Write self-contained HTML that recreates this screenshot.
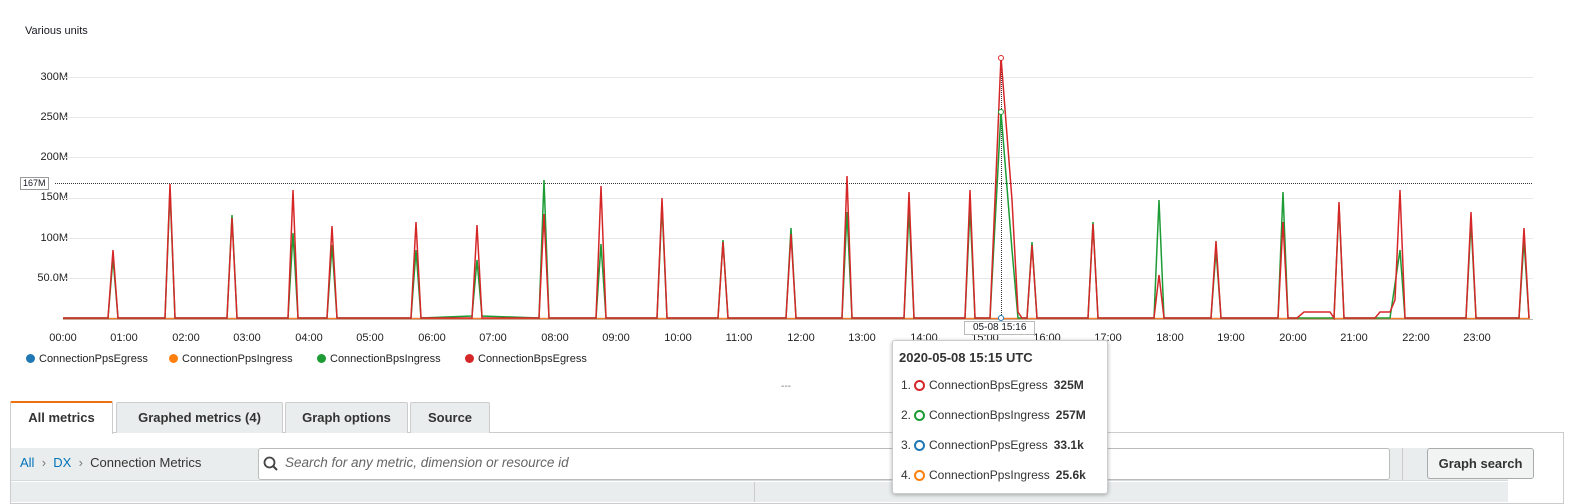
<!DOCTYPE html><html><head><style>
body{margin:0;width:1575px;height:499px;overflow:hidden;background:#fff;font-family:"Liberation Sans",Arial,sans-serif;position:relative;color:#16191f}
.a{position:absolute}
.yl{position:absolute;font-size:11px;color:#222;right:1507px}
.xl{position:absolute;font-size:11px;color:#222;top:332px;width:40px;text-align:center}
.tab{position:absolute;top:402px;height:30px;background:#eaeded;border:1px solid #ccc;border-bottom:none;font-size:13px;font-weight:bold;line-height:30px;text-align:center;border-radius:2px 2px 0 0;color:#333}
.lg{position:absolute;top:353px;font-size:11px;color:#222}
.lg i{display:inline-block;width:9px;height:9px;border-radius:50%;margin-right:4px;vertical-align:-1px}
.tr{position:absolute;left:8px;font-size:12px;color:#333}
.tr i{display:inline-block;width:7px;height:7px;border:2px solid;border-radius:50%;margin:0 4px 0 3px;vertical-align:-2px}
.tr b{margin-left:6px}
</style></head><body>
<div class="a" style="left:25px;top:25px;font-size:11px">Various units</div>
<div class="yl" style="top:71px">300M</div>
<div class="yl" style="top:111px">250M</div>
<div class="yl" style="top:151px">200M</div>
<div class="yl" style="top:191px">150M</div>
<div class="yl" style="top:232px">100M</div>
<div class="yl" style="top:272px">50.0M</div>
<svg class="a" style="left:0;top:0" width="1575" height="340">
<g stroke="#e8e8e8" stroke-width="1">
<line x1="63" x2="1533" y1="77.5" y2="77.5"/><line x1="63" x2="1533" y1="117.5" y2="117.5"/><line x1="63" x2="1533" y1="157.5" y2="157.5"/><line x1="63" x2="1533" y1="198.5" y2="198.5"/><line x1="63" x2="1533" y1="238.5" y2="238.5"/><line x1="63" x2="1533" y1="278.5" y2="278.5"/></g>
<line x1="55" x2="1533" y1="183.5" y2="183.5" stroke="#333" stroke-dasharray="1,1"/>
<line x1="1001.5" x2="1001.5" y1="58" y2="319" stroke="#333" stroke-dasharray="1,1"/>
<line x1="63" x2="1533" y1="319.5" y2="319.5" stroke="#bbb"/>
<line x1="63" x2="1530" y1="318.5" y2="318.5" stroke="#f47b2a" stroke-width="1.5"/>
<path fill="none" stroke="#1d9b35" stroke-width="1.5" d="M63,318 L108,318 L113,258 L118,318 L165,318 L170,190 L175,318 L227,318 L232,215 L237,318 L288,318 L293,233 L298,318 L327,318 L332,245 L337,318 L411,318 L416,250 L421,318 L472,316 L477,260 L482,316 L539,318 L544,180 L549,318 L596,318 L601,244 L606,318 L657,318 L662,205 L667,318 L718,318 L723,240 L728,318 L786,318 L791,228 L796,318 L842,318 L847,212 L852,318 L904,318 L909,210 L914,318 L965,318 L970,208 L975,318 L990,318 L1001,112 L1012,250 L1018,318 L1027,318 L1032,242 L1037,318 L1088,318 L1093,222 L1098,318 L1154,318 L1159,200 L1164,318 L1211,318 L1216,250 L1221,318 L1278,318 L1283,192 L1288,318 L1334,318 L1339,205 L1344,318 L1390,318 L1400,250 L1405,318 L1466,318 L1471,222 L1476,318 L1519,318 L1524,240 L1529,318"/>
<path fill="none" stroke="#d62728" stroke-width="1.5" d="M63,318 L108,318 L113,250 L118,318 L165,318 L170,184 L175,318 L227,318 L232,218 L237,318 L288,318 L293,190 L298,318 L327,318 L332,226 L337,318 L411,318 L416,222 L421,318 L472,318 L477,225 L482,318 L539,318 L544,214 L549,318 L596,318 L601,186 L606,318 L657,318 L662,198 L667,318 L718,318 L723,242 L728,318 L786,318 L791,234 L796,318 L842,318 L847,176 L852,318 L904,318 L909,192 L914,318 L965,318 L970,190 L975,318 L990,318 L1001,57 L1012,200 L1018,312 L1022,318 L1027,318 L1032,245 L1037,318 L1088,318 L1093,224 L1098,318 L1154,318 L1159,275 L1164,318 L1211,318 L1216,241 L1221,318 L1278,318 L1283,222 L1288,318 L1297,318 L1304,312 L1330,312 L1334,318 L1339,202 L1344,318 L1375,318 L1380,312 L1390,312 L1395,300 L1400,190 L1405,318 L1466,318 L1471,212 L1476,318 L1519,318 L1524,228 L1529,318"/>
<circle cx="1001" cy="58" r="2.5" fill="#fff" stroke="#d62728"/><circle cx="1001" cy="112" r="2.5" fill="#fff" stroke="#1d9b35"/><circle cx="1001" cy="318" r="2.5" fill="#fff" stroke="#1f77b4"/>
</svg>
<div class="a" style="left:20px;top:177px;font-size:9px;border:1px solid #999;background:#fff;padding:0 2px;line-height:11px">167M</div>
<div class="xl" style="left:43px">00:00</div><div class="xl" style="left:104px">01:00</div><div class="xl" style="left:166px">02:00</div><div class="xl" style="left:227px">03:00</div><div class="xl" style="left:289px">04:00</div><div class="xl" style="left:350px">05:00</div><div class="xl" style="left:412px">06:00</div><div class="xl" style="left:473px">07:00</div><div class="xl" style="left:535px">08:00</div><div class="xl" style="left:596px">09:00</div><div class="xl" style="left:658px">10:00</div><div class="xl" style="left:719px">11:00</div><div class="xl" style="left:781px">12:00</div><div class="xl" style="left:842px">13:00</div><div class="xl" style="left:904px">14:00</div><div class="xl" style="left:965px">15:00</div><div class="xl" style="left:1027px">16:00</div><div class="xl" style="left:1088px">17:00</div><div class="xl" style="left:1150px">18:00</div><div class="xl" style="left:1211px">19:00</div><div class="xl" style="left:1273px">20:00</div><div class="xl" style="left:1334px">21:00</div><div class="xl" style="left:1396px">22:00</div><div class="xl" style="left:1457px">23:00</div>
<div class="a" style="left:964px;top:321px;font-size:10px;border:1px solid #bbb;background:#fff;padding:0 8px;line-height:12px">05-08 15:16</div>
<div class="lg" style="left:26px"><i style="background:#1f77b4"></i>ConnectionPpsEgress</div>
<div class="lg" style="left:169px"><i style="background:#ff7f0e"></i>ConnectionPpsIngress</div>
<div class="lg" style="left:317px"><i style="background:#1d9b35"></i>ConnectionBpsIngress</div>
<div class="lg" style="left:465px"><i style="background:#d62728"></i>ConnectionBpsEgress</div>
<div class="a" style="left:781px;top:381px;font-size:10px;color:#777">---</div>
<div class="a" style="left:10px;top:432px;width:1552px;height:70px;border:1px solid #ccc;background:#fff"></div>
<div class="tab" style="left:10px;width:101px;background:#fff;border-top:2px solid #ec7211;height:31px;top:401px">All metrics</div>
<div class="tab" style="left:116px;width:165px">Graphed metrics (4)</div>
<div class="tab" style="left:285px;width:121px">Graph options</div>
<div class="tab" style="left:410px;width:78px">Source</div>
<div class="a" style="left:11px;top:448px;width:1497px;height:32px;background:#eaeded;border-bottom:1px solid #d5dbdb"></div>
<div class="a" style="left:20px;top:455px;font-size:13px;color:#333"><span style="color:#0073bb">All</span>&nbsp; <span style="color:#777">›</span> &nbsp;<span style="color:#0073bb">DX</span>&nbsp; <span style="color:#777">›</span> &nbsp;Connection Metrics</div>
<div class="a" style="left:258px;top:448px;width:1130px;height:30px;background:#fff;border:1px solid #bbb;border-radius:3px"></div>
<svg class="a" style="left:263px;top:456px" width="16" height="16"><circle cx="6.5" cy="6.5" r="5" fill="none" stroke="#444" stroke-width="1.8"/><line x1="10" y1="10" x2="14" y2="14" stroke="#444" stroke-width="2"/></svg>
<div class="a" style="left:285px;top:455px;font-size:13.5px;font-style:italic;color:#666">Search for any metric, dimension or resource id</div>
<div class="a" style="left:1402px;top:448px;width:1px;height:32px;background:#ccc"></div>
<div class="a" style="left:1427px;top:448px;width:105px;height:29px;background:#f2f3f3;border:1px solid #aaa;border-radius:3px;font-size:13px;font-weight:bold;line-height:29px;text-align:center;color:#333">Graph search</div>
<div class="a" style="left:11px;top:482px;width:1497px;height:20px;background:#eaeded"></div>
<div class="a" style="left:754px;top:482px;width:1px;height:20px;background:#ccc"></div>
<div class="a" style="left:892px;top:340px;width:214px;height:152px;background:#fff;border:1px solid #ccc;border-radius:3px;box-shadow:0 1px 4px rgba(0,0,0,.3)">
<div class="a" style="left:6px;top:9px;font-size:13px;font-weight:bold;color:#333">2020-05-08 15:15 UTC</div>
<div class="tr" style="top:37px">1.<i style="border-color:#d62728"></i>ConnectionBpsEgress<b>325M</b></div>
<div class="tr" style="top:67px">2.<i style="border-color:#1d9b35"></i>ConnectionBpsIngress<b>257M</b></div>
<div class="tr" style="top:97px">3.<i style="border-color:#1f77b4"></i>ConnectionPpsEgress<b>33.1k</b></div>
<div class="tr" style="top:127px">4.<i style="border-color:#ff7f0e"></i>ConnectionPpsIngress<b>25.6k</b></div>
</div>
</body></html>
